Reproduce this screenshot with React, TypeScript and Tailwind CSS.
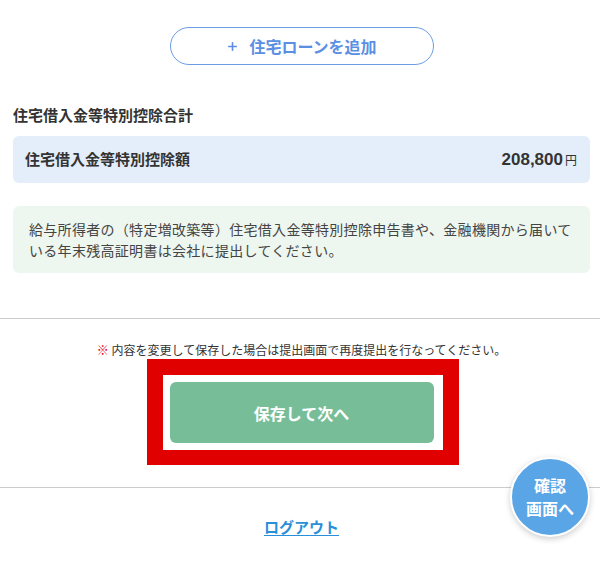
import {Plus} from "lucide-react";

const Divider = () => <div className="border-t border-[#cccccc]" />;

export default function App() {
    return (
        <div className="relative min-h-[581px] bg-white font-['Noto_Sans_CJK_JP',sans-serif] text-[#333333]">
            <div className="pl-[13px] pr-[10px] pt-[27px]">
                <button
                    type="button"
                    className="mx-auto flex h-[38px] w-[264px] items-center justify-center gap-[10px] rounded-full border border-[#6b9de6] bg-white text-[16px] font-bold text-[#5b8fe3]"
                >
                    <Plus size={13} strokeWidth={3} />
                    <span>住宅ローンを追加</span>
                </button>

                <h2 className="mt-[39px] text-[15px] font-bold leading-[22px]">住宅借入金等特別控除合計</h2>

                <div className="mt-[10px] flex h-[47px] items-center justify-between rounded-[6px] bg-[#e4eefa] pl-[12px] pr-[13px]">
                    <span className="text-[15px] font-bold">住宅借入金等特別控除額</span>
                    <span className="flex items-baseline gap-[2px]">
                        <span className="font-['Liberation_Sans',sans-serif] text-[17px] font-bold">208,800</span>
                        <span className="text-[12px]">円</span>
                    </span>
                </div>

                <div className="mt-[23px] rounded-[6px] bg-[#edf6ef] pb-[12px] pl-[16px] pr-[14px] pt-[13px] text-[14px] leading-[21px] tracking-[0.3px] text-[#444444]">
                    給与所得者の（特定増改築等）住宅借入金等特別控除申告書や、金融機関から届いている年末残高証明書は会社に提出してください。
                </div>
            </div>

            <div className="mt-[45px]">
                <Divider />
            </div>

            <div className="pl-[13px] pr-[10px]">
                <p className="mt-[22px] text-center text-[12px] leading-[18px]">
                    <span className="font-bold text-[#e60012]">※</span> 内容を変更して保存した場合は提出画面で再度提出を行なってください。
                </p>
                <div className="mx-auto w-[312px] translate-x-[1px] border-[16px] border-b-[15px] border-[#e00000] bg-white pb-[7px] pl-[7px] pr-[9px] pt-[7px]">
                    <button
                        type="button"
                        className="flex h-[61px] w-[264px] items-center justify-center rounded-[6px] bg-[#77be98] text-[16px] font-bold text-white"
                    >
                        保存して次へ
                    </button>
                </div>
            </div>

            <div className="mt-[22px]">
                <Divider />
            </div>

            <div className="pb-[45px] pl-[13px] pr-[10px] pt-[26px] text-center">
                <a href="#" className="text-[15px] font-bold leading-[22px] text-[#2a8fd8] underline underline-offset-[2px]">
                    ログアウト
                </a>
            </div>

            <button
                type="button"
                className="absolute left-[510px] top-[457px] flex h-[80px] w-[80px] flex-col items-center justify-center rounded-full border-2 border-white bg-[#5aa5e6] text-[16px] font-bold leading-[23px] text-white shadow-[0_2px_6px_rgba(0,0,0,0.2)]"
            >
                <span>確認</span>
                <span>画面へ</span>
            </button>
        </div>
    );
}
